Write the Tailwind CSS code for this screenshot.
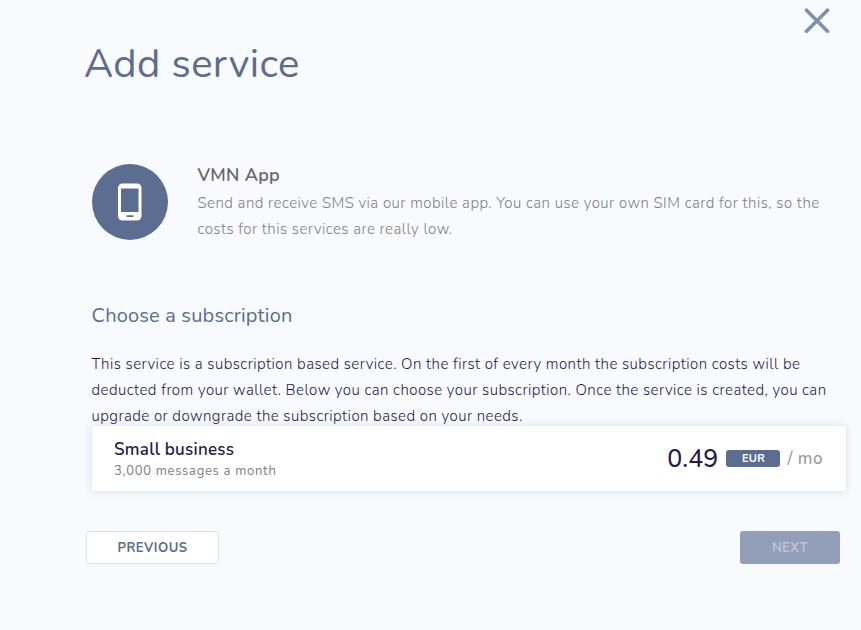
<!DOCTYPE html>
<html lang="en">

<head>
    <meta charset="UTF-8">
    <meta name="viewport" content="width=device-width, initial-scale=1.0">
    <title>Add service</title>
    <script src="https://cdn.jsdelivr.net/npm/@tailwindcss/browser@4"></script>
</head>

<body class="relative h-[630px] overflow-hidden bg-[#f8fafe] pt-10 pl-[86px] font-['Nunito','Lato',sans-serif] text-[#241b4b]">

    <!-- Close -->
    <button class="absolute top-2 right-[31px]" aria-label="Close">
        <svg class="w-[26px] h-[26px] text-[#7f8fae]" viewBox="0 0 26 26" fill="none" stroke="currentColor"
            stroke-width="3.6" stroke-linecap="round">
            <path d="M2.500 2.200l21 21M23.500 2.200l-21 21" />
        </svg>
    </button>

    <h1 class="-ml-0.5 h-12 text-[40px] leading-12 tracking-[0.4px] text-[#5b6d90]">Add service</h1>

    <!-- Selected service -->
    <div class="mt-[76px] ml-1.5 flex gap-[29.5px]">
        <div class="flex w-[76px] h-[76px] shrink-0 items-center justify-center rounded-full bg-[#5b6d90]">
            <svg class="w-6 h-[38px]" viewBox="0 0 24 38">
                <rect y="0.500" width="23.500" height="37" rx="4.5" fill="#fff" />
                <path fill="#5b6d90" d="M3 5.500h17.500v23.500H3zM8.500 32.200h7v1.800h-7z" />
            </svg>
        </div>
        <div class="whitespace-nowrap">
            <h2 class="h-[26px] text-lg leading-[22px] tracking-[0.25px] font-semibold text-[#666]">VMN App</h2>
            <p class="text-[15px] leading-[26px] tracking-[0.46px] font-light text-[#808080]">
                Send and receive SMS via our mobile app. You can use your own SIM card for this, so the<br>
                costs for this services are really low.
            </p>
        </div>
    </div>

    <!-- Subscription -->
    <div class="mt-[60px] ml-[5.5px] w-[754.5px] whitespace-nowrap">
        <h3 class="h-[49px] text-xl leading-7 tracking-[0.18px] text-[#5b6d90]">Choose a subscription</h3>
        <p class="text-[15px] leading-[26px] tracking-[0.45px] font-light">
            This service is a subscription based service. On the first of every month the subscription costs will be<br>
            deducted from your wallet. Below you can choose your subscription. Once the service is created, you can<br>
            upgrade or downgrade the subscription based on your needs.
        </p>
        <div class="relative ml-[0.5px] -mt-[3px] flex h-[65px] items-center justify-between rounded-[3px] bg-white pl-[22px] pr-[23px] shadow-[0_0_8px_rgba(60,70,110,0.16)]">
            <div class="pt-[3px]">
                <div class="text-[17px] leading-[22px] tracking-[0.25px] font-semibold">Small business</div>
                <div class="text-[13px] leading-5 tracking-[0.7px] text-[#808080]">3,000 messages a month</div>
            </div>
            <div class="flex items-center">
                <span class="pt-0.5 text-[25px] tracking-[0.1px] font-medium">0.49</span>
                <span class="ml-2 w-[54px] h-[17px] rounded-[3px] bg-[#5b6d90] text-center text-[11px] leading-[17px] tracking-[0.2px] font-bold text-white">EUR</span>
                <span class="ml-[7px] text-[17px] tracking-[0.5px] font-medium text-[#999]">/ mo</span>
            </div>
        </div>
    </div>

    <!-- Actions -->
    <div class="mt-10 flex w-[754px] justify-between">
        <button class="w-[133px] h-[33px] rounded-[3px] border border-[#dde1ea] bg-white pt-0.5 text-[13px] tracking-[0.5px] font-bold text-[#5b6d90]">PREVIOUS</button>
        <button class="w-[100px] h-[33px] rounded-[3px] bg-[#939fb8] pt-0.5 text-[13px] tracking-[0.5px] font-bold text-[#bcc4d3]" disabled>NEXT</button>
    </div>

</body>

</html>
